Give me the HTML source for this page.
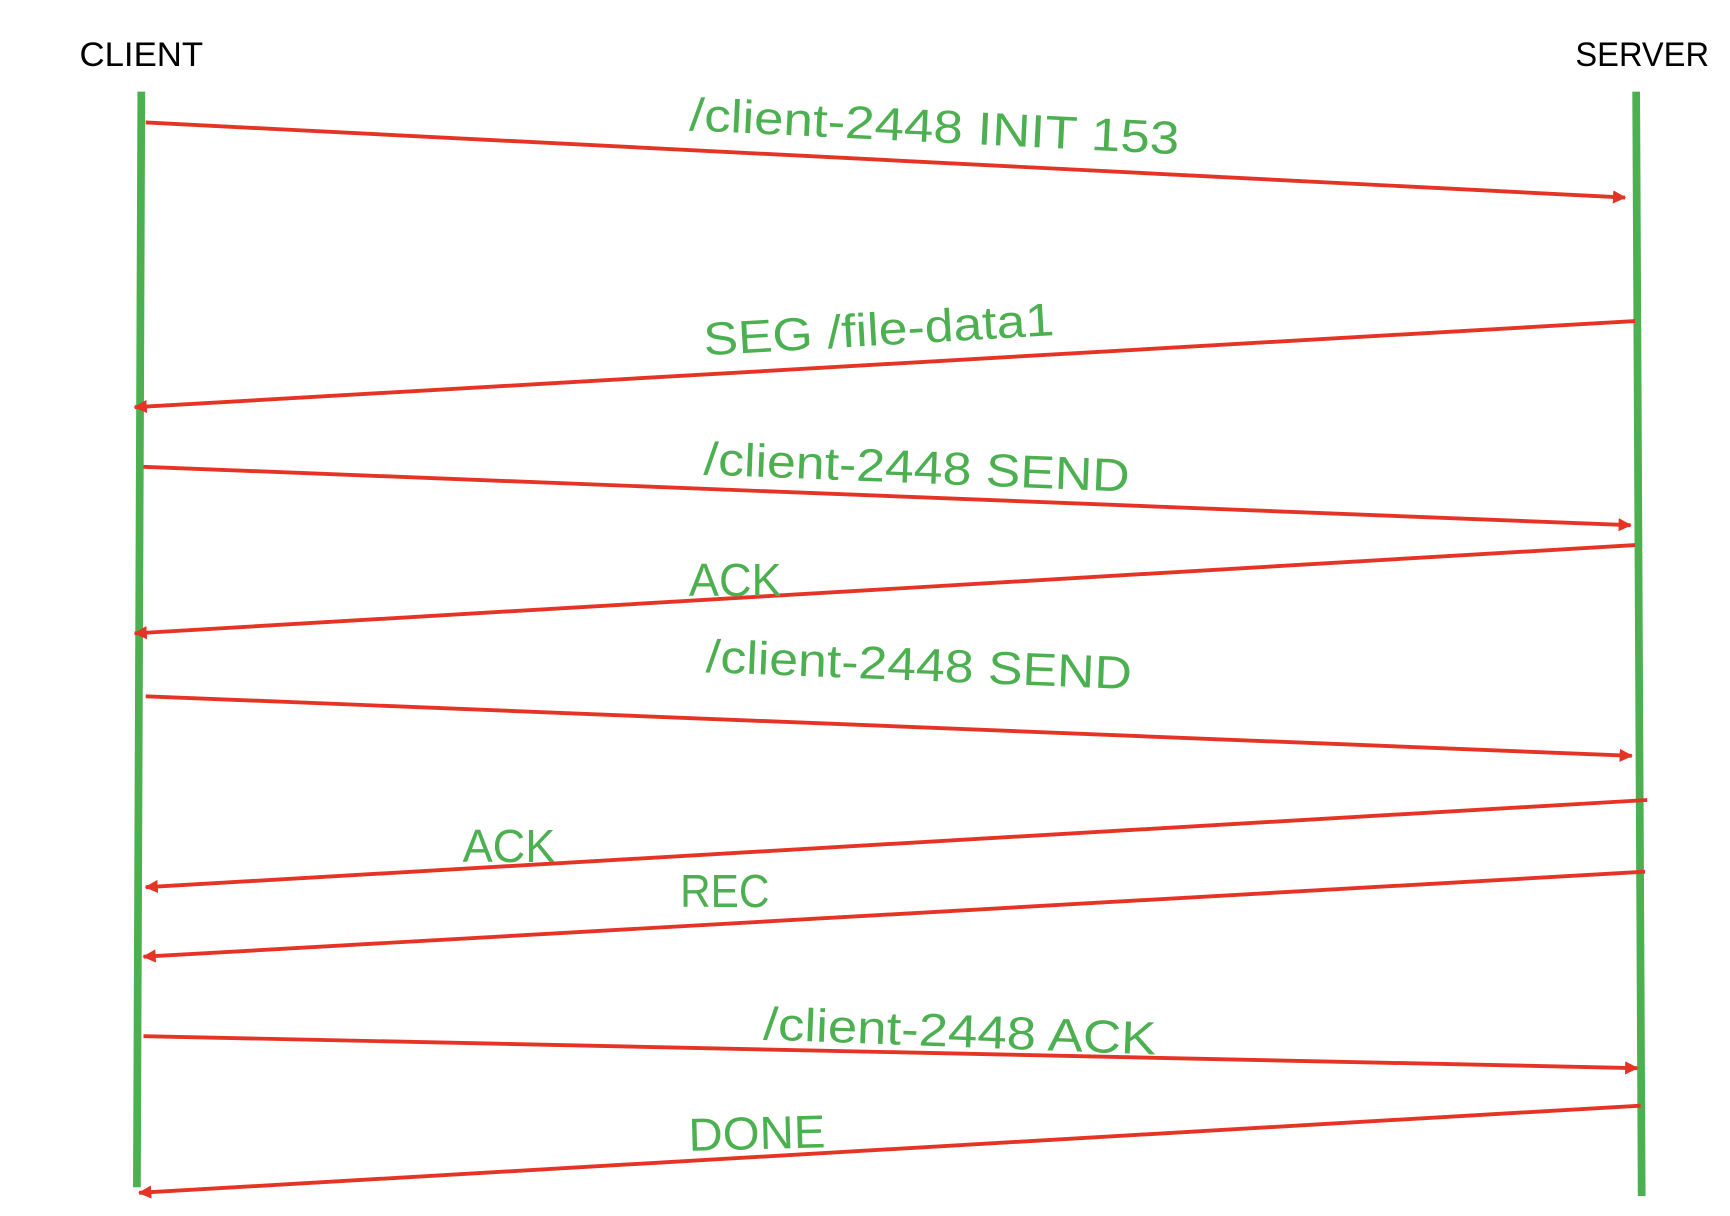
<!DOCTYPE html>
<html><head><meta charset="utf-8"><style>
html,body{margin:0;padding:0;background:#fff;}
svg{display:block}
.g{fill:#4caf50;font-family:"Liberation Sans",sans-serif;font-size:42px}
.b{fill:#000;font-family:"Liberation Sans",sans-serif;font-size:31px}
.r{stroke:#e53325;stroke-width:3.5;fill:none}
</style></head><body>
<svg width="1730" height="1216" viewBox="0 0 1567 1102" preserveAspectRatio="none">
<defs><marker id="a" markerWidth="14" markerHeight="12" refX="11" refY="6" orient="auto" markerUnits="userSpaceOnUse"><path d="M0,0 L12,6 L0,12 z" fill="#e53325"/></marker></defs>
<text class="b" x="72" y="60" textLength="112" lengthAdjust="spacingAndGlyphs">CLIENT</text>
<text class="b" x="1427" y="60" textLength="121" lengthAdjust="spacingAndGlyphs">SERVER</text>
<line x1="128" y1="83" x2="124" y2="1076" stroke="#4caf50" stroke-width="7"/>
<line x1="1482" y1="83" x2="1487" y2="1084" stroke="#4caf50" stroke-width="7"/>
<g class="r">
<line x1="132" y1="111" x2="1472" y2="179" marker-end="url(#a)"/>
<line x1="1481" y1="291" x2="122" y2="369" marker-end="url(#a)"/>
<line x1="130" y1="423" x2="1477" y2="476" marker-end="url(#a)"/>
<line x1="1481" y1="494" x2="122" y2="574" marker-end="url(#a)"/>
<line x1="132" y1="631" x2="1478" y2="685" marker-end="url(#a)"/>
<line x1="1492" y1="725" x2="132" y2="804" marker-end="url(#a)"/>
<line x1="1490" y1="790" x2="130" y2="867" marker-end="url(#a)"/>
<line x1="130" y1="939" x2="1483" y2="968" marker-end="url(#a)"/>
<line x1="1486" y1="1002" x2="126" y2="1081" marker-end="url(#a)"/>
</g>
<text class="g" transform="translate(624,118) rotate(2.8)" textLength="444" lengthAdjust="spacingAndGlyphs">/client-2448 INIT 153</text>
<text class="g" transform="translate(638,322) rotate(-3.3)" textLength="318" lengthAdjust="spacingAndGlyphs">SEG /file-data1</text>
<text class="g" transform="translate(637,430) rotate(2.3)" textLength="386" lengthAdjust="spacingAndGlyphs">/client-2448 SEND</text>
<text class="g" x="624" y="540" textLength="84" lengthAdjust="spacingAndGlyphs">ACK</text>
<text class="g" transform="translate(639,609) rotate(2.3)" textLength="386" lengthAdjust="spacingAndGlyphs">/client-2448 SEND</text>
<text class="g" x="419" y="781" textLength="84" lengthAdjust="spacingAndGlyphs">ACK</text>
<text class="g" x="616" y="822" textLength="81" lengthAdjust="spacingAndGlyphs">REC</text>
<text class="g" transform="translate(691,942) rotate(2.2)" textLength="356" lengthAdjust="spacingAndGlyphs">/client-2448 ACK</text>
<text class="g" transform="translate(624,1043) rotate(-1.5)" textLength="124" lengthAdjust="spacingAndGlyphs">DONE</text>
</svg>
</body></html>
